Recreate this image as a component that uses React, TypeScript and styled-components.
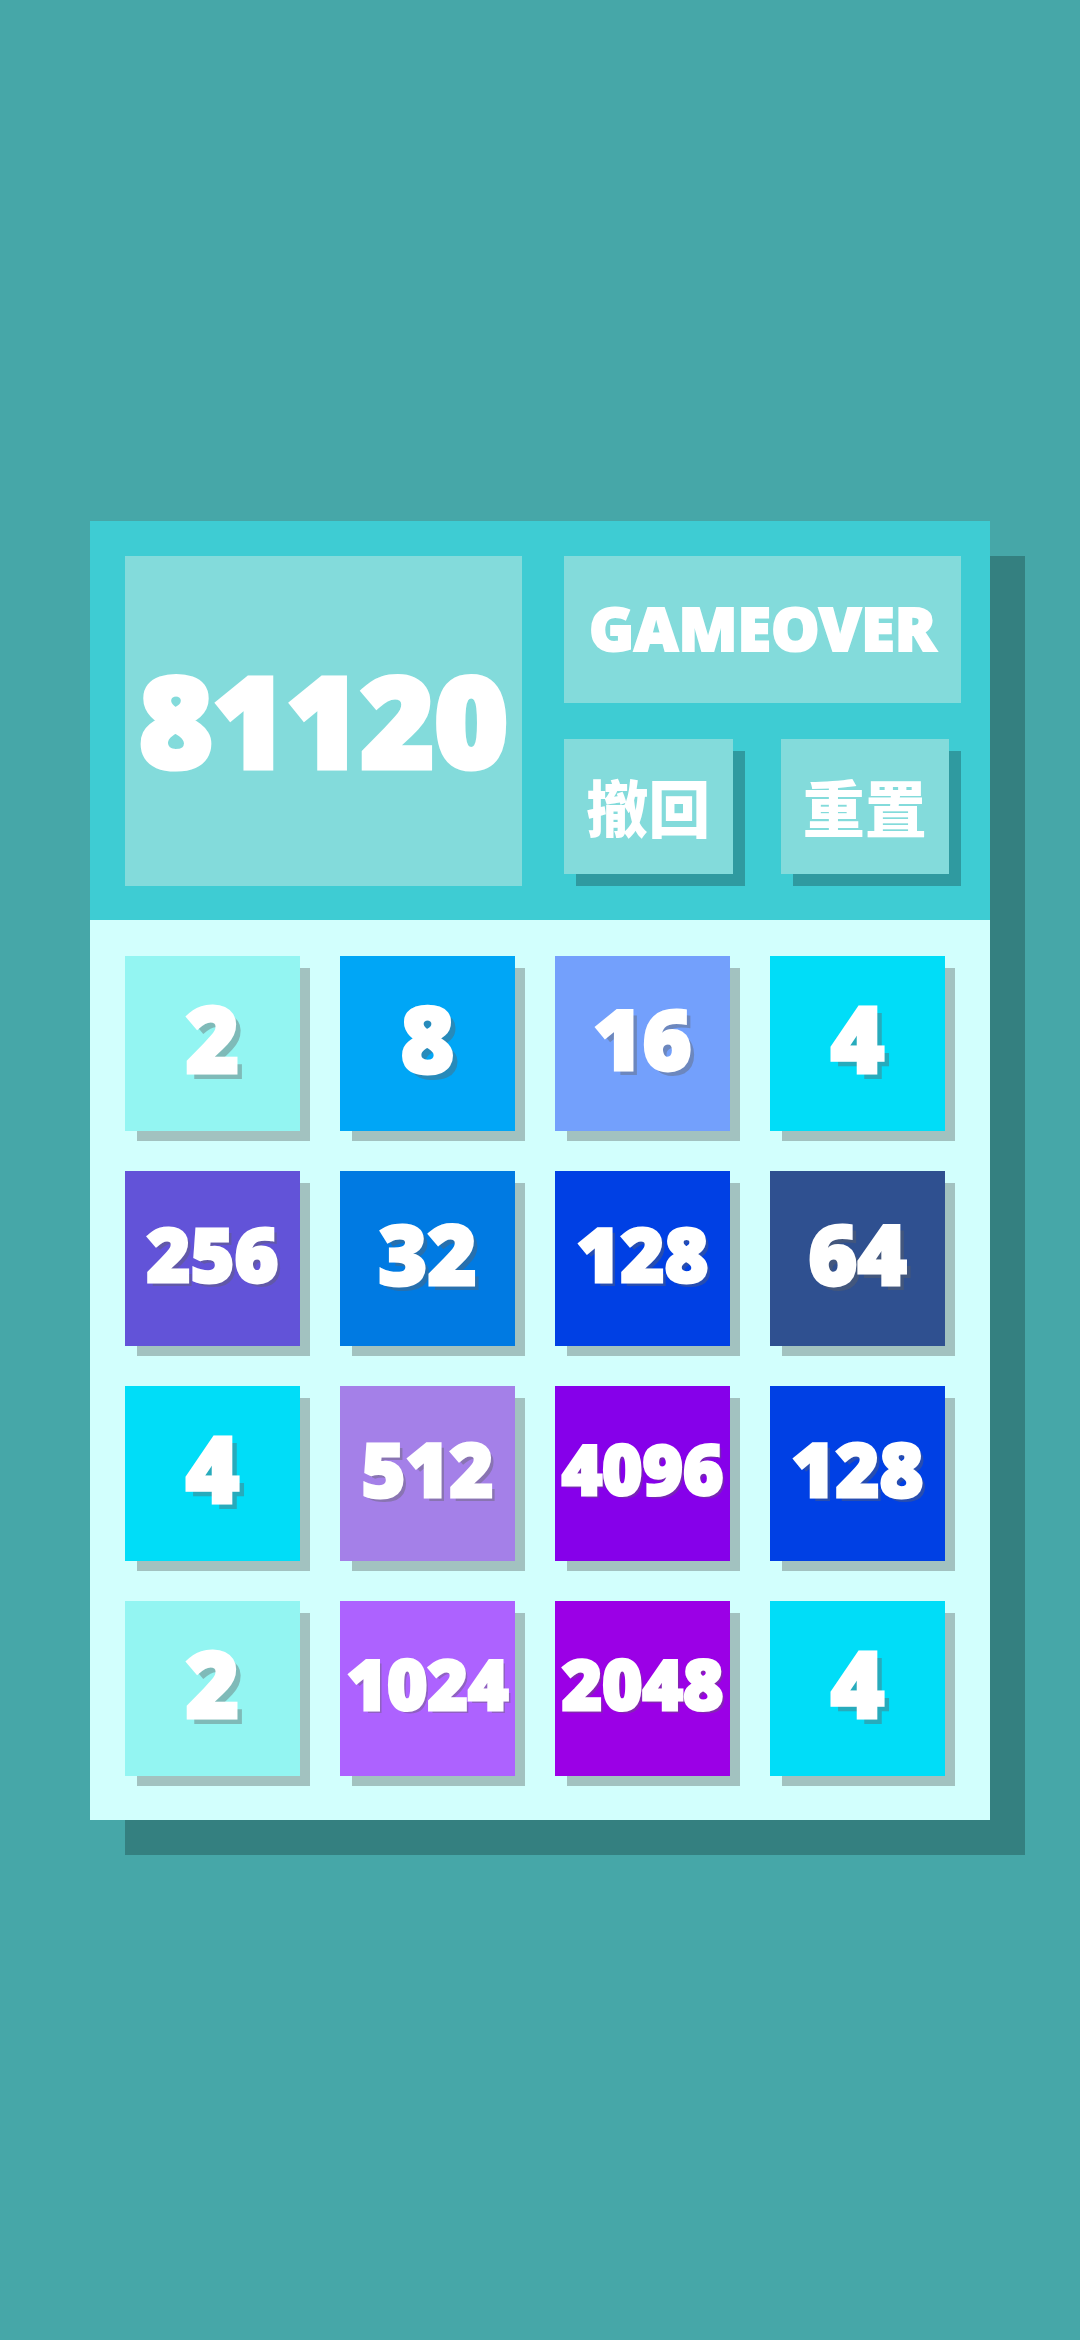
import styled, { createGlobalStyle } from "styled-components";

const GlobalStyle = createGlobalStyle`
  *, *::before, *::after { box-sizing: border-box; }
  body {
    margin: 0;
    background: #46a7a8;
    color: #fff;
    font-family: "Noto Sans", "Noto Sans CJK SC", sans-serif;
    font-weight: 900;
  }
`;

const Page = styled.main`
  min-height: 100vh;
  display: flex;
  flex-direction: column;
  justify-content: center;
  padding: 0 90px;
`;

const Board = styled.section`
  background: #d2fffd;
  box-shadow: 35px 35px 0 #348080;
`;

const Header = styled.header`
  display: grid;
  grid-template-columns: 1fr 1fr;
  gap: 42px;
  padding: 35px 29px 34px 35px;
  background: #3eccd3;
`;

const Panel = styled.div<{ $size: number; $stroke: number }>`
  display: flex;
  align-items: center;
  justify-content: center;
  padding-bottom: 4px;
  background: #83dbdb;
  font-size: ${(p) => p.$size}px;
  line-height: 1;
  -webkit-text-stroke: ${(p) => p.$stroke}px #fff;
`;

const Side = styled.div`
  display: grid;
  grid-template-rows: 147px 135px;
  gap: 36px;
  padding-bottom: 12px;
`;

const Actions = styled.div`
  display: grid;
  grid-template-columns: 1fr 1fr;
  gap: 48px;
  padding-right: 12px;
`;

const ActionButton = styled.button`
  display: flex;
  align-items: center;
  justify-content: center;
  padding: 0;
  border: 0;
  background: #83dbdb;
  box-shadow: 12px 12px 0 #2f9aa0;
  color: inherit;
  font: 900 62px/1 "Noto Sans CJK SC", sans-serif;
  white-space: nowrap;
  cursor: pointer;
`;

const Grid = styled.div`
  display: grid;
  grid-template-columns: repeat(4, 1fr);
  gap: 40px;
  padding: 36px 45px 44px 35px;
`;

const Tile = styled.div<{ $color: string; $size: number; $depth: number }>`
  display: flex;
  align-items: center;
  justify-content: center;
  aspect-ratio: 1;
  min-width: 0;
  padding-bottom: 10px;
  background: ${(p) => p.$color};
  box-shadow: 11px 11px 0 -1px #a2c2c0;
  font-size: ${(p) => p.$size}px;
  line-height: 1;
  -webkit-text-stroke: 3px #fff;
  text-shadow: ${(p) => `${p.$depth}px ${p.$depth}px 0`} rgba(98, 98, 98, 0.4);
`;

const COLORS: Record<number, string> = {
  2: "#93f5f2",
  4: "#00ddf8",
  8: "#00a6f6",
  16: "#73a0fc",
  32: "#007ae2",
  64: "#2f5090",
  128: "#0040e4",
  256: "#6253d8",
  512: "#a480e8",
  1024: "#ad62ff",
  2048: "#9b00e6",
  4096: "#8600ea",
};

// Text size and shadow depth by number of digits
const DIGITS: Record<number, { size: number; depth: number }> = {
  1: { size: 92, depth: 6 },
  2: { size: 84, depth: 5 },
  3: { size: 75, depth: 4 },
  4: { size: 69, depth: 3 },
};

const CELLS = [2, 8, 16, 4, 256, 32, 128, 64, 4, 512, 4096, 128, 2, 1024, 2048, 4];

export default function App() {
  return (
    <Page>
      <GlobalStyle />
      <Board>
        <Header>
          <Panel $size={126} $stroke={5}>81120</Panel>
          <Side>
            <Panel $size={61} $stroke={2}>GAMEOVER</Panel>
            <Actions>
              <ActionButton type="button">撤回</ActionButton>
              <ActionButton type="button">重置</ActionButton>
            </Actions>
          </Side>
        </Header>
        <Grid>
          {CELLS.map((value, index) => {
            const { size, depth } = DIGITS[String(value).length];
            return (
              <Tile key={index} $color={COLORS[value]} $size={size} $depth={depth}>
                {value}
              </Tile>
            );
          })}
        </Grid>
      </Board>
    </Page>
  );
}
